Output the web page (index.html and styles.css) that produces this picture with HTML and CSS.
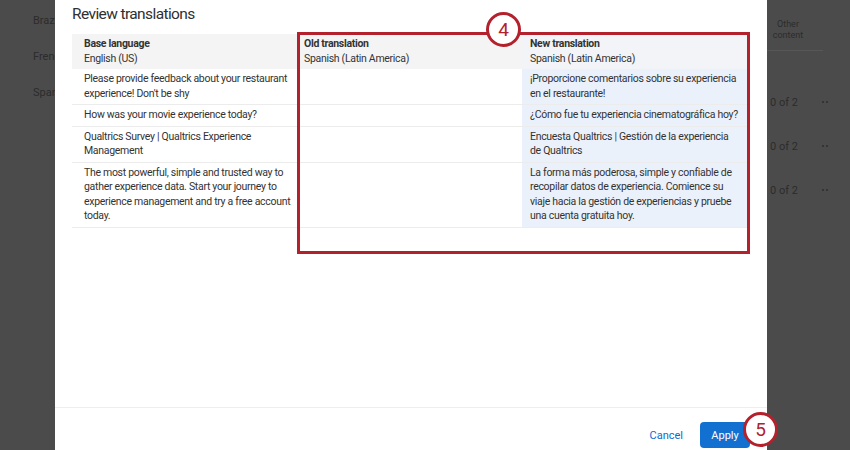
FILE: index.html
```html
<!DOCTYPE html>
<html lang="en">
<head>
    <meta charset="UTF-8" />
    <title>Review translations</title>
    <link rel="stylesheet" href="styles.css">
</head>
<body>
    <div class="pagina">
        <div class="fondo-izq">
            <p>Brazi</p>
            <p>Frenc</p>
            <p>Span</p>
        </div>

        <div class="modal">
            <h2 class="titulo">Review translations</h2>

            <div class="cuerpo">
                <table class="tabla">
                    <colgroup>
                        <col class="ancho-base">
                        <col class="ancho-old">
                        <col class="ancho-new">
                    </colgroup>
                    <tr class="cabecera">
                        <th class="col-base"><b>Base language</b><br>English (US)</th>
                        <th class="col-old"><b>Old translation</b><br>Spanish (Latin America)</th>
                        <th class="col-new"><b>New translation</b><br>Spanish (Latin America)</th>
                    </tr>
                    <tr>
                        <td class="col-base">Please provide feedback about your restaurant<br>experience! Don't be shy</td>
                        <td class="col-old"></td>
                        <td class="col-new">¡Proporcione comentarios sobre su experiencia<br>en el restaurante!</td>
                    </tr>
                    <tr>
                        <td class="col-base">How was your movie experience today?</td>
                        <td class="col-old"></td>
                        <td class="col-new">¿Cómo fue tu experiencia cinematográfica hoy?</td>
                    </tr>
                    <tr>
                        <td class="col-base">Qualtrics Survey | Qualtrics Experience<br>Management</td>
                        <td class="col-old"></td>
                        <td class="col-new">Encuesta Qualtrics | Gestión de la experiencia<br>de Qualtrics</td>
                    </tr>
                    <tr>
                        <td class="col-base">The most powerful, simple and trusted way to<br>gather experience data. Start your journey to<br>experience management and try a free account<br>today.</td>
                        <td class="col-old"></td>
                        <td class="col-new">La forma más poderosa, simple y confiable de<br>recopilar datos de experiencia. Comience su<br>viaje hacia la gestión de experiencias y pruebe<br>una cuenta gratuita hoy.</td>
                    </tr>
                </table>

                <!-- marca roja del paso 4 -->
                <div class="marca-4"></div>
                <span class="paso paso-4">4</span>
            </div>

            <div class="pie">
                <button type="button" class="btn-cancel">Cancel</button>
                <button type="button" class="btn-apply">Apply</button>
                <span class="paso paso-5">5</span>
            </div>
        </div>

        <div class="fondo-der">
            <div class="otro">Other<br>content</div>
            <div class="fila"><span>0 of 2</span><i class="puntos"></i><i class="puntos"></i></div>
            <div class="fila"><span>0 of 2</span><i class="puntos"></i><i class="puntos"></i></div>
            <div class="fila"><span>0 of 2</span><i class="puntos"></i><i class="puntos"></i></div>
        </div>
    </div>
</body>
</html>
```

FILE: styles.css
```css
body {
    margin: 0;
    padding: 0;
    background-color: #4b4b4b;
    font-family: Roboto, "Open Sans", Arial, sans-serif;
    overflow: hidden;
}
.pagina {
    display: flex;
    width: 850px;
    height: 450px;
}

.fondo-izq {
    width: 55px;
    flex-shrink: 0;
    overflow: hidden;
    padding-top: 13px;
    box-sizing: border-box;
}
.fondo-izq p {
    margin: 0 0 20px 33px;
    font-size: 11px;
    line-height: 16px;
    color: #2c2c2c;
    white-space: nowrap;
}

.modal {
    width: 712px;
    flex-shrink: 0;
    background-color: #ffffff;
    display: flex;
    flex-direction: column;
    position: relative;
}
.titulo {
    margin: 0;
    padding: 3px 17px 0;
    font-size: 15.5px;
    font-weight: normal;
    letter-spacing: -0.6px;
    line-height: 22px;
    color: #2f2f2f;
}
.cuerpo {
    flex: 1;
    padding: 9px 17px 0;
    position: relative;
}
.tabla {
    border-collapse: collapse;
    table-layout: fixed;
    width: 678px;
    font-size: 10.5px;
    letter-spacing: -0.3px;
    line-height: 14.5px;
    color: #333;
}
.ancho-base {
    width: 225px;
}
.ancho-old {
    width: 225px;
}
.tabla th, .tabla td {
    text-align: left;
    vertical-align: top;
    padding: 3px 8px;
    border-bottom: 1px solid #ececec;
    white-space: nowrap;
    overflow: hidden;
}
.tabla th {
    font-weight: normal;
    background-color: #f4f4f5;
    border-bottom: none;
}
.tabla b {
    font-weight: 700;
}
.tabla .col-base {
    padding-left: 12px;
}
.tabla .col-old {
    padding-left: 7px;
}
.col-new {
    background-color: #ebf1fa;
}
.cabecera .col-new {
    background-color: #f2f4f7;
}

.marca-4 {
    position: absolute;
    left: 242px;
    top: 7px;
    width: 447px;
    height: 216px;
    border: 3px solid #b3212d;
}
.paso {
    position: absolute;
    width: 29px;
    height: 29px;
    border: 3px solid #b3212d;
    border-radius: 50%;
    background-color: #ffffff;
    color: #b3212d;
    font-size: 19px;
    line-height: 29px;
    text-align: center;
}
.paso-4 {
    left: 431px;
    top: -13px;
}
.paso-5 {
    left: 688px;
    top: 4px;
}

.pie {
    height: 42px;
    border-top: 1px solid #eeeeee;
    display: flex;
    justify-content: flex-end;
    align-items: center;
    gap: 17px;
    padding: 0 17px 0 0;
    position: relative;
    flex-shrink: 0;
}
.pie button {
    font-family: inherit;
    font-size: 11px;
    border: none;
    cursor: pointer;
    margin-top: 12px;
}
.btn-cancel {
    background: none;
    color: #0b6dcf;
    padding: 0;
}
.btn-apply {
    background-color: #1170d0;
    color: #ffffff;
    width: 50px;
    height: 26px;
    border-radius: 4px;
}

.fondo-der {
    flex: 1;
    overflow: hidden;
    color: #2c2c2c;
}
.otro {
    width: 42px;
    padding-right: 14px;
    margin-top: 19px;
    padding-bottom: 9px;
    font-size: 9px;
    line-height: 11px;
    text-align: center;
    border-bottom: 1px solid #575757;
    white-space: nowrap;
}
.fila {
    display: flex;
    align-items: center;
    gap: 2px;
    height: 44px;
    padding-left: 3px;
    font-size: 11px;
}
.otro + .fila {
    margin-top: 29px;
}
.fila span {
    width: 50px;
}
.puntos {
    width: 2px;
    height: 2px;
    border-radius: 50%;
    background-color: #2c2c2c;
}
```
